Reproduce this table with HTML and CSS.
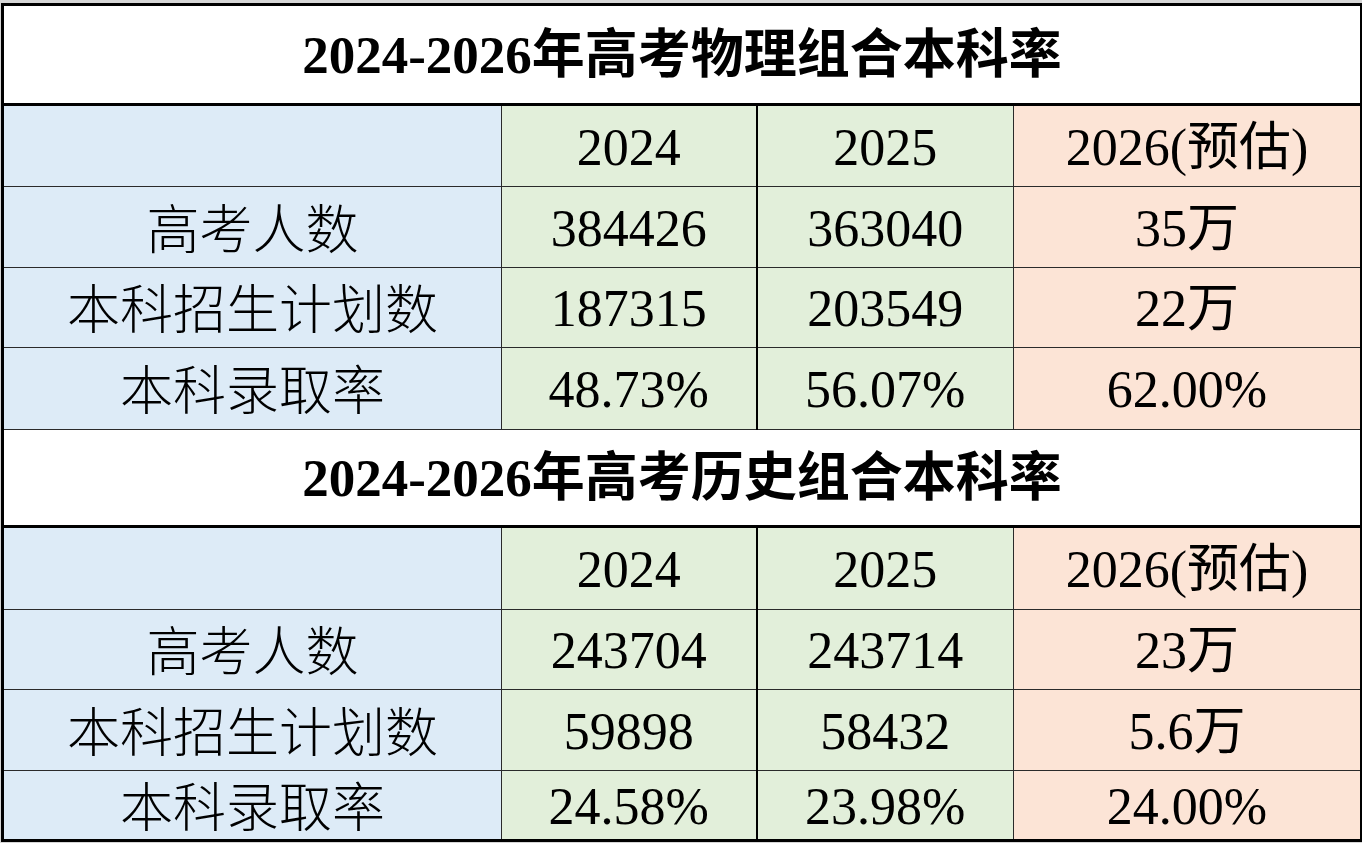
FILE: index.html
```html
<!DOCTYPE html>
<html lang="zh-CN">
<head>
<meta charset="utf-8">
<title>2024-2026年高考本科率</title>
<link rel="stylesheet" href="styles.css">
</head>
<body>
<div class="page">
<table class="rates">
  <colgroup>
    <col class="c-label">
    <col class="c-y24">
    <col class="c-y25">
    <col class="c-y26">
  </colgroup>
  <tbody>
    <tr class="r-title">
      <th colspan="4" class="title">2024-2026年高考物理组合本科率</th>
    </tr>
    <tr class="r-head">
      <td class="lbl"></td>
      <td class="g">2024</td>
      <td class="g sep">2025</td>
      <td class="p">2026(预估)</td>
    </tr>
    <tr class="r-a">
      <td class="lbl">高考人数</td>
      <td class="g">384426</td>
      <td class="g sep">363040</td>
      <td class="p">35万</td>
    </tr>
    <tr class="r-b">
      <td class="lbl">本科招生计划数</td>
      <td class="g">187315</td>
      <td class="g sep">203549</td>
      <td class="p">22万</td>
    </tr>
    <tr class="r-c">
      <td class="lbl">本科录取率</td>
      <td class="g">48.73%</td>
      <td class="g sep">56.07%</td>
      <td class="p">62.00%</td>
    </tr>
    <tr class="r-title2">
      <th colspan="4" class="title">2024-2026年高考历史组合本科率</th>
    </tr>
    <tr class="r-head2">
      <td class="lbl"></td>
      <td class="g">2024</td>
      <td class="g sep">2025</td>
      <td class="p">2026(预估)</td>
    </tr>
    <tr class="r-a2">
      <td class="lbl">高考人数</td>
      <td class="g">243704</td>
      <td class="g sep">243714</td>
      <td class="p">23万</td>
    </tr>
    <tr class="r-b2">
      <td class="lbl">本科招生计划数</td>
      <td class="g">59898</td>
      <td class="g sep">58432</td>
      <td class="p">5.6万</td>
    </tr>
    <tr class="r-c2">
      <td class="lbl">本科录取率</td>
      <td class="g">24.58%</td>
      <td class="g sep">23.98%</td>
      <td class="p">24.00%</td>
    </tr>
  </tbody>
</table>
</div>
</body>
</html>
```
FILE: styles.css
```css
html, body {
  margin: 0;
  padding: 0;
}
body {
  background: #d6d6d6;
  width: 1362px;
  height: 843px;
  overflow: hidden;
}
.page {
  padding: 3px 0 0 1px;
}
.rates {
  border-collapse: collapse;
  table-layout: fixed;
  width: 1359px;
  border: 3px solid #000;
  font-family: "Liberation Serif", "Noto Sans CJK SC", serif;
  font-size: 52px;
  color: #000;
}
.c-label { width: 499px; }
.c-y24 { width: 255px; }
.c-y25 { width: 257px; }
.c-y26 { width: 348px; }
.rates td, .rates th {
  padding: 3px 0 0;
  text-align: center;
  vertical-align: middle;
  border: 1px solid #2a2a2a;
  line-height: 1;
  white-space: nowrap;
}
.rates .title {
  background: #fff;
  font-weight: bold;
  font-size: 53px;
  padding: 2px 0 0;
  border-bottom: 3px solid #000;
  border-top: 1px solid #2a2a2a;
}
.rates .lbl {
  background: #ddebf7;
  font-weight: 300;
  font-size: 53px;
  padding-top: 8px;
}
.rates .g { background: #e2efda; }
.rates .p { background: #fce4d6; }
.rates .sep { border-left: 2px solid #000; }
.r-title { height: 100px; }
.r-head { height: 82px; }
.r-a { height: 81px; }
.r-b { height: 80px; }
.r-c { height: 82px; }
.r-title2 { height: 97px; }
.r-head2 { height: 83px; }
.r-a2 { height: 80px; }
.r-b2 { height: 81px; }
.r-c2 { height: 70px; }
```
